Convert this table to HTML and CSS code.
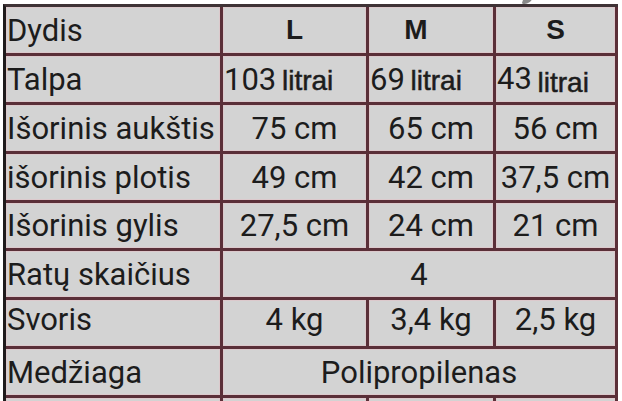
FILE: index.html
```html
<!DOCTYPE html>
<html lang="lt">
<head>
<meta charset="utf-8">
<link rel="stylesheet" href="styles.css">
</head>
<body>
<div class="page">
  <span class="glyph-tail"></span>
  <div class="sheet">
    <div class="cell label">Dydis</div>
    <div class="cell head">L</div>
    <div class="cell head head-m">M</div>
    <div class="cell head">S</div>

    <div class="cell label">Talpa</div>
    <div class="cell left"><span>103 <span class="unit">litrai</span></span></div>
    <div class="cell left"><span>69 <span class="unit">litrai</span></span></div>
    <div class="cell left"><span>43 <span class="unit low">litrai</span></span></div>

    <div class="cell label">Išorinis aukštis</div>
    <div class="cell">75 cm</div>
    <div class="cell">65 cm</div>
    <div class="cell">56 cm</div>

    <div class="cell label">išorinis plotis</div>
    <div class="cell">49 cm</div>
    <div class="cell">42 cm</div>
    <div class="cell">37,5 cm</div>

    <div class="cell label">Išorinis gylis</div>
    <div class="cell">27,5 cm</div>
    <div class="cell">24 cm</div>
    <div class="cell">21 cm</div>

    <div class="cell label">Ratų skaičius</div>
    <div class="cell span3">4</div>

    <div class="cell label raised">Svoris</div>
    <div class="cell raised">4 kg</div>
    <div class="cell raised">3,4 kg</div>
    <div class="cell raised">2,5 kg</div>

    <div class="cell label">Medžiaga</div>
    <div class="cell span3">Polipropilenas</div>

    <div class="cell label"></div>
    <div class="cell"></div>
    <div class="cell"></div>
    <div class="cell"></div>
  </div>
</div>
</body>
</html>
```

FILE: styles.css
```css
html, body {
  margin: 0;
  padding: 0;
  background: #ffffff;
  overflow: hidden;
}

.page {
  position: relative;
  width: 622px;
  height: 401px;
  overflow: hidden;
  padding: 4px 0 0 3px;
  box-sizing: border-box;
}

.glyph-tail {
  position: absolute;
  left: 523px;
  top: -4px;
  width: 9px;
  height: 8px;
  background: #8a8a8a;
  border-radius: 0 0 6px 2px;
  transform: skewX(-20deg);
}

.sheet {
  display: grid;
  grid-template-columns: 214px 143px 124px 119px;
  grid-auto-rows: 46px;
  grid-template-rows: 46px 46px 46px 46px 45px 46px 46px 46px 46px;
  gap: 3px;
  width: 609px;
  padding: 0 3px 3px 0;
  border-top: 3px solid #3f3336;
  border-left: 3px solid #1f1b1c;
  background: #5a2f38;
  font-family: Roboto, "Liberation Sans", sans-serif;
  font-size: 31px;
  color: #1c1c1c;
}

.cell {
  background: #d3d3d3;
  box-shadow: inset 0 0 0 1px #dcc9cc;
  display: flex;
  align-items: center;
  justify-content: center;
  white-space: nowrap;
  overflow: hidden;
}

.label {
  justify-content: flex-start;
  padding-left: 1px;
}

.left {
  justify-content: flex-start;
  padding-left: 1px;
}

.head {
  font-family: "Liberation Sans", Arial, sans-serif;
  font-weight: bold;
  font-size: 28px;
}

.head-m {
  padding-right: 30px;
}

.unit {
  font-family: "Liberation Sans", Arial, sans-serif;
  font-size: 28px;
  -webkit-text-stroke: 0.5px #1c1c1c;
  margin-left: -2px;
}

.low {
  vertical-align: -3px;
}

.span3 {
  grid-column: span 3;
}

.raised {
  align-items: flex-start;
  padding-top: 1px;
}
```
